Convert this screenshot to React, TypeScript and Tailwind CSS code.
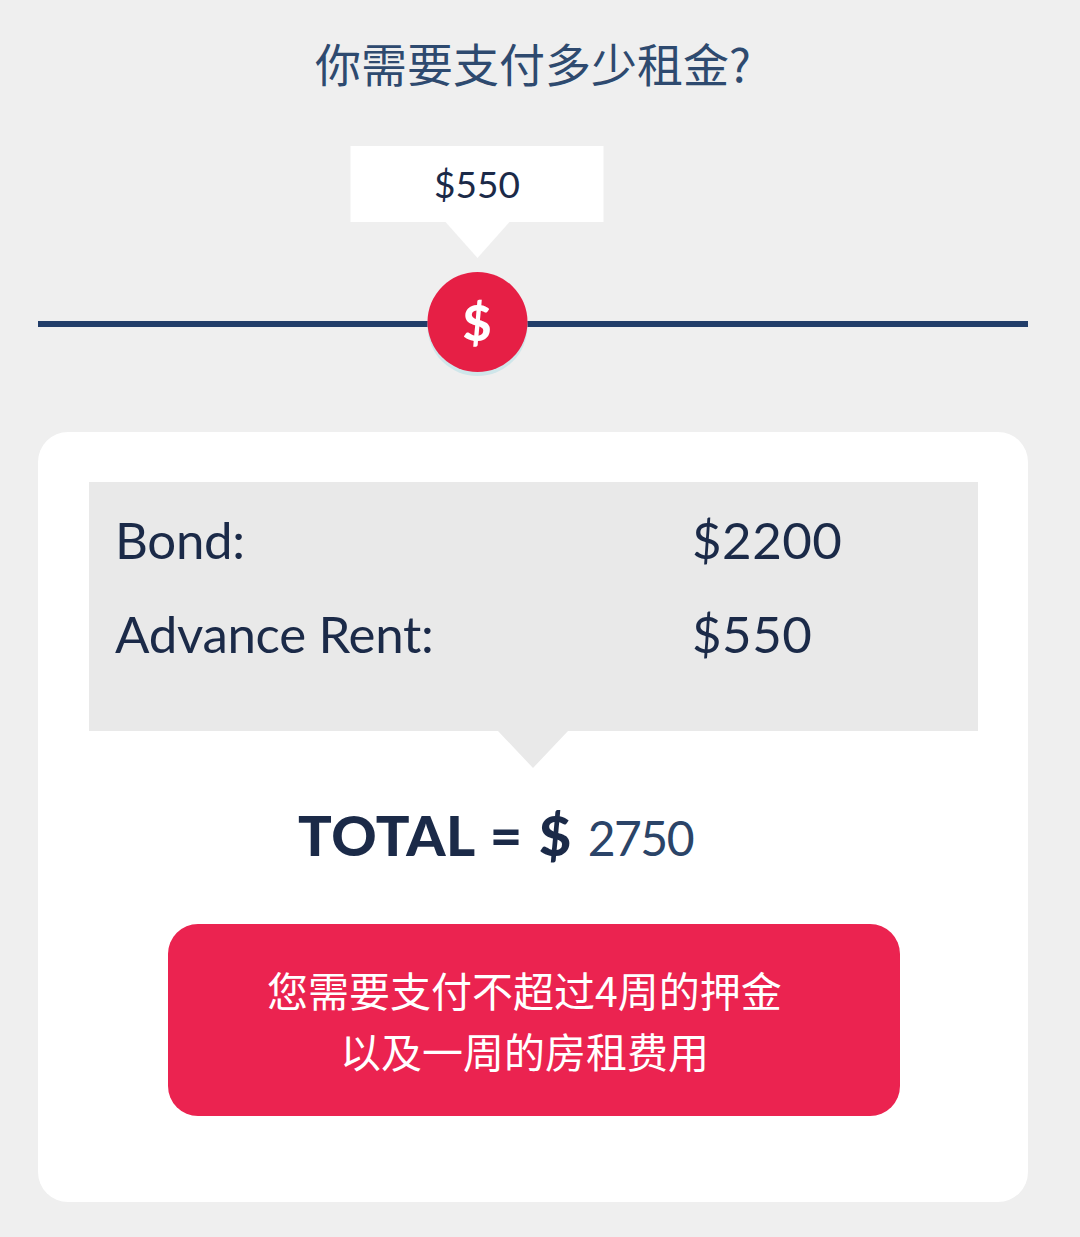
import React from "react";

const rows = [
  { label: "Bond:", value: "$2200" },
  { label: "Advance Rent:", value: "$550" },
];

export default function App() {
  return (
    <div className="min-h-[1237px] bg-[#efefef] pt-[32px] font-['Lato','Noto_Sans_CJK_SC',sans-serif]">
      {/* 标题 */}
      <h1 className="ml-[38px] w-[990px] text-center text-[46px] leading-[60px] font-normal text-[#2e4a6f] font-['Noto_Sans_CJK_SC',sans-serif]">
        你需要支付多少租金?
      </h1>

      {/* 滑块 */}
      <div className="relative ml-[38px] w-[990px] mt-[54px] h-[230px] pt-[175px]">
        <div className="h-[6px] bg-[#213d69]" />
        <div className="absolute top-0 left-[439px] -translate-x-1/2 flex flex-col items-center">
          <div className="w-[253px] h-[76px] bg-white flex items-center justify-center text-[37px] text-[#1b2a48] font-['Lato',sans-serif]">
            $550
          </div>
          <div className="w-0 h-0 border-l-[32px] border-r-[32px] border-t-[36px] border-l-transparent border-r-transparent border-t-white" />
          <div className="mt-[14px] w-[100px] h-[100px] rounded-full bg-[#e61f45] shadow-[0_4px_0_#cfe6ea] flex items-center justify-center text-white text-[50px] font-black font-['Lato',sans-serif]">
            $
          </div>
        </div>
      </div>

      {/* 卡片 */}
      <div className="ml-[38px] w-[990px] mt-[56px] bg-white rounded-[30px] pl-[51px] pr-[50px] pt-[50px] pb-[86px]">
        <div className="relative bg-[#e9e9e9] h-[249px] pt-[30px] pl-[26px]">
          {rows.map((r, i) => (
            <div
              key={r.label}
              className={`grid grid-cols-[577px_1fr] text-[51px] leading-[56px] text-[#1b2a48] ${i > 0 ? "mt-[38px]" : ""}`}
            >
              <span className="tracking-[-0.3px]">{r.label}</span>
              <span className="tracking-[0.5px]">{r.value}</span>
            </div>
          ))}
          <div className="absolute left-[409px] -bottom-[37px] w-0 h-0 border-l-[35px] border-r-[35px] border-t-[37px] border-l-transparent border-r-transparent border-t-[#e9e9e9]" />
        </div>

        <div className="mt-[72px] pl-[209px] flex items-baseline leading-[64px] font-['Lato',sans-serif]">
          <span className="text-[56px] font-black text-[#1b2a48] tracking-[0.5px] [word-spacing:2px]">TOTAL = $</span>
          <span className="ml-[16px] text-[48px] text-[#2b4468] tracking-[-1.5px]">2750</span>
        </div>

        <div className="mx-auto mt-[54px] w-[732px] h-[192px] rounded-[30px] bg-[#eb2350] flex flex-col items-center justify-center pr-[18px] text-white text-[41px] leading-[61px] font-['Noto_Sans_CJK_SC',sans-serif]">
          <span>您需要支付不超过4周的押金</span>
          <span>以及一周的房租费用</span>
        </div>
      </div>
    </div>
  );
}
